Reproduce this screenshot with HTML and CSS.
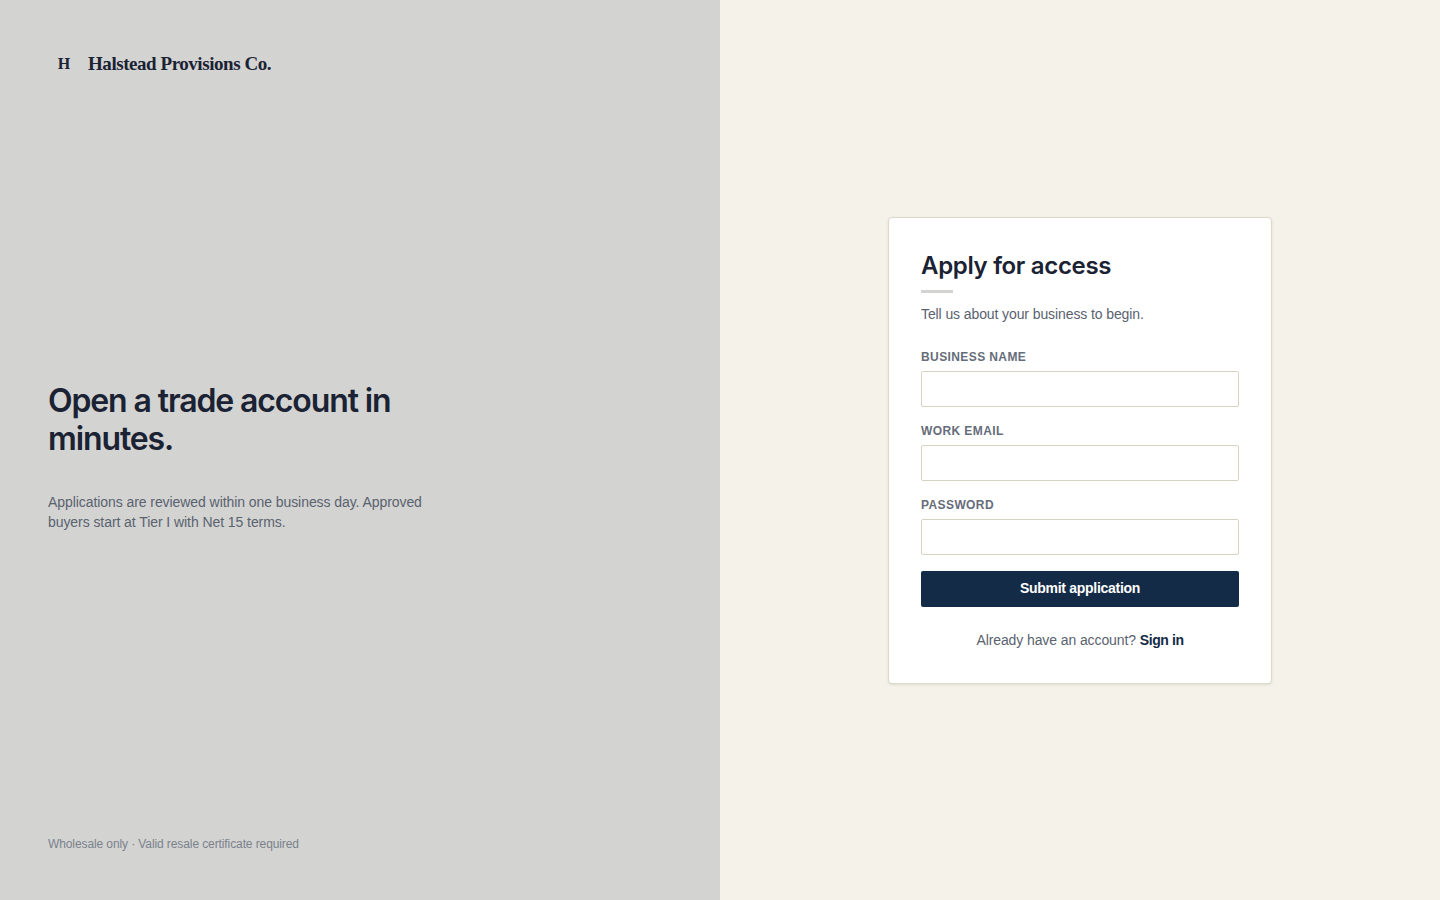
FILE: index.html
```html
<!DOCTYPE html>
<html lang="en">
<head>
<meta charset="utf-8">
<title>Halstead Provisions Co.</title>
<link rel="stylesheet" href="styles.css">
</head>
<body>
<main class="split">
  <section class="panel">
    <div class="brand"><span class="mark">H</span><span class="brand-name">Halstead Provisions Co.</span></div>
    <div class="pitch">
      <h1>Open a trade account in minutes.</h1>
      <p>Applications are reviewed within one business day. Approved buyers start at Tier I with Net 15 terms.</p>
    </div>
    <div class="fine">Wholesale only · Valid resale certificate required</div>
  </section>
  <section class="side">
    <form class="card">
      <h2>Apply for access</h2>
      <div class="rule"></div>
      <p class="sub">Tell us about your business to begin.</p>
      <label class="field"><span>BUSINESS NAME</span><input type="text"></label>
      <label class="field"><span>WORK EMAIL</span><input type="email"></label>
      <label class="field"><span>PASSWORD</span><input type="password"></label>
      <button type="button">Submit application</button>
      <p class="alt">Already have an account? <a href="#">Sign in</a></p>
    </form>
  </section>
</main>
</body>
</html>
```
FILE: styles.css
```css
* { box-sizing: border-box; }
html, body { margin: 0; height: 100%; }
body { font-family: "Liberation Sans", Arial, sans-serif; color: #1a2233; }
.split { display: grid; grid-template-columns: 720px 720px; height: 900px; }
.panel { background: #d3d3d1; padding: 48px; display: flex; flex-direction: column; justify-content: space-between; }
.brand { display: flex; align-items: center; gap: 8px; height: 32px; }
.mark { width: 32px; text-align: center; font: 700 16px/32px "Liberation Serif", serif; color: #1a2233; }
.brand-name { font: 700 19px/32px "Liberation Serif", serif; letter-spacing: -0.45px; color: #1a2233; }
.pitch { width: 384px; margin-bottom: 2px; }
h1 { margin: 0 0 34px; font: 600 32px/38px Inter, sans-serif; letter-spacing: -1.12px; color: #1a2233; }
.pitch p { margin: 0; font-size: 14px; line-height: 20px; letter-spacing: -0.07px; color: #5a6270; }
.fine { font-size: 12px; line-height: 16px; letter-spacing: -0.1px; color: #7a828c; }
.side { background: #f5f2ea; display: flex; align-items: center; justify-content: center; }
.card { width: 384px; height: 467px; margin-top: 1px; padding: 32px; background: #fff; border: 1px solid #dcd9c9; border-radius: 4px; box-shadow: 0 1px 3px rgba(30,30,20,.1); }
h2 { margin: 0; font: 600 24px/32px Inter, sans-serif; letter-spacing: -0.32px; color: #1a2233; }
.rule { width: 32px; height: 3px; margin-top: 8px; background: #d3d3d1; }
.sub { margin: 11px 0 25px; font-size: 14px; line-height: 20px; letter-spacing: -0.1px; color: #5a6270; }
.field { display: block; margin-bottom: 16px; }
.field span { display: block; margin-bottom: 6px; font-size: 12px; line-height: 16px; font-weight: 700; letter-spacing: 0.4px; color: #666d7a; }
.field input { display: block; width: 100%; height: 36px; padding: 0 10px; background: #fff; border: 1px solid #d6d3c3; border-radius: 2px; outline: none; }
button { display: block; width: 100%; height: 36px; margin-top: 16px; padding: 0 0 2px; background: #142b47; color: #fff; border: 0; border-radius: 2px; font: 700 14px/20px "Liberation Sans", Arial, sans-serif; letter-spacing: -0.28px; }
.alt { margin: 23px 0 0; text-align: center; font-size: 14px; line-height: 20px; letter-spacing: -0.1px; color: #5a6270; }
.alt a { color: #142b47; font-weight: 700; letter-spacing: -0.4px; text-decoration: none; }
```
